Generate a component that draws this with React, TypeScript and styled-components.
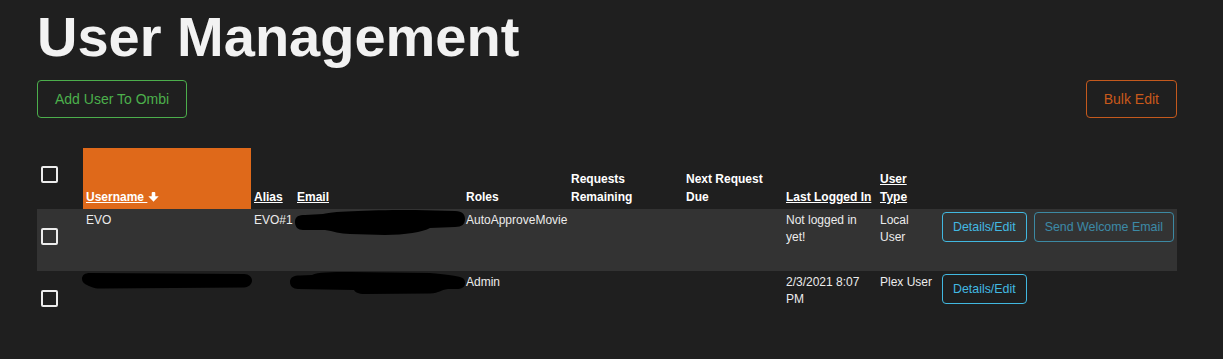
import React from "react";
import styled, { createGlobalStyle } from "styled-components";

const GlobalStyle = createGlobalStyle`
  html, body {
    margin: 0;
    padding: 0;
    background: #1f1f1f;
  }
  body {
    font-family: "Liberation Sans", Arial, sans-serif;
    color: #e8e8e8;
    min-height: 359px;
  }
  * { box-sizing: border-box; }
`;

const COLUMNS = "46px 168px 43px 169px 105px 115px 100px 94px 62px 1fr";

const Page = styled.div`
  padding: 5px 46px 0 37px;
`;

const Title = styled.h1`
  margin: 0;
  font-size: 56px;
  line-height: 64px;
  font-weight: 700;
  color: #f2f2f2;
`;

const Toolbar = styled.div`
  display: flex;
  justify-content: space-between;
  align-items: center;
  margin-top: 11px;
`;

const OutlineButton = styled.button<{ $tone: "green" | "orange" }>`
  height: 38px;
  padding: 0 17px;
  border-radius: 4px;
  background: transparent;
  font-family: "Liberation Sans", Arial, sans-serif;
  font-size: 14px;
  font-weight: 400;
  border: 1px solid ${(p) => (p.$tone === "green" ? "#4cae4c" : "#c4591d")};
  color: ${(p) => (p.$tone === "green" ? "#4cb04c" : "#c8591b")};
  cursor: pointer;
`;

const Table = styled.div`
  margin-top: 30px;
  display: flex;
  flex-direction: column;
`;

const HeaderRow = styled.div`
  display: grid;
  grid-template-columns: ${COLUMNS};
  height: 61px;
`;

const BodyRow = styled.div<{ $striped?: boolean }>`
  position: relative;
  display: grid;
  grid-template-columns: ${COLUMNS};
  height: 62px;
  background: ${(p) => (p.$striped ? "#333333" : "transparent")};
`;

const CheckCell = styled.div`
  display: flex;
  align-items: center;
  padding: 0 0 8px 4px;
`;

const Checkbox = styled.span`
  display: inline-block;
  width: 17px;
  height: 17px;
  border: 2px solid #ececec;
  border-radius: 2px;
`;

const HeaderCell = styled.div<{ $active?: boolean }>`
  display: flex;
  align-items: flex-end;
  padding: 0 3px 3px 3px;
  font-size: 12px;
  line-height: 18px;
  font-weight: 700;
  color: #ffffff;
  background: ${(p) => (p.$active ? "#df691a" : "transparent")};
`;

const HeaderLabel = styled.span<{ $sortable?: boolean }>`
  text-decoration: ${(p) => (p.$sortable ? "underline" : "none")};
  text-underline-offset: 1px;
`;

const SortArrow = styled.svg`
  width: 11px;
  height: 10px;
  margin-left: 1px;
  vertical-align: -1px;
`;

const Cell = styled.div`
  padding: 3px 3px 0 3px;
  font-size: 12px;
  line-height: 17px;
  color: #ececec;
  white-space: normal;
`;

const Actions = styled.div`
  display: flex;
  align-items: flex-start;
  gap: 7px;
  padding: 3px 3px 0 3px;
`;

const InfoButton = styled.button<{ $disabled?: boolean }>`
  height: 30px;
  padding: 0 10px;
  border-radius: 4px;
  background: transparent;
  border: 1px solid #41b8e0;
  color: #42b9e2;
  font-family: "Liberation Sans", Arial, sans-serif;
  font-size: 12.4px;
  opacity: ${(p) => (p.$disabled ? 0.65 : 1)};
  cursor: pointer;
`;

const Redaction = styled.svg`
  position: absolute;
  overflow: visible;
`;

type Row = {
  username: string;
  alias: string;
  roles: string;
  lastLogged: string;
  userType: string;
  welcome: boolean;
};

const rows: Row[] = [
  {
    username: "EVO",
    alias: "EVO#1",
    roles: "AutoApproveMovie",
    lastLogged: "Not logged in yet!",
    userType: "Local User",
    welcome: true,
  },
  {
    username: "",
    alias: "",
    roles: "Admin",
    lastLogged: "2/3/2021 8:07 PM",
    userType: "Plex User",
    welcome: false,
  },
];

function Arrow() {
  return (
    <SortArrow viewBox="0 0 11 10">
      <rect x="3.7" y="0" width="3.6" height="5.5" rx="1" fill="#fff" />
      <polygon points="0.3,4.2 10.7,4.2 5.5,9.8" fill="#fff" strokeLinejoin="round" />
    </SortArrow>
  );
}

export default function App() {
  return (
    <>
      <GlobalStyle />
      <Page>
        <Title>User Management</Title>
        <Toolbar>
          <OutlineButton $tone="green">Add User To Ombi</OutlineButton>
          <OutlineButton $tone="orange">Bulk Edit</OutlineButton>
        </Toolbar>
        <Table>
          <HeaderRow>
            <CheckCell>
              <Checkbox />
            </CheckCell>
            <HeaderCell $active>
              <span>
                <HeaderLabel $sortable>Username&nbsp;</HeaderLabel>
                <Arrow />
              </span>
            </HeaderCell>
            <HeaderCell>
              <HeaderLabel $sortable>Alias</HeaderLabel>
            </HeaderCell>
            <HeaderCell>
              <HeaderLabel $sortable>Email</HeaderLabel>
            </HeaderCell>
            <HeaderCell>
              <HeaderLabel>Roles</HeaderLabel>
            </HeaderCell>
            <HeaderCell>
              <HeaderLabel>Requests Remaining</HeaderLabel>
            </HeaderCell>
            <HeaderCell>
              <HeaderLabel>Next Request Due</HeaderLabel>
            </HeaderCell>
            <HeaderCell>
              <HeaderLabel $sortable>Last Logged In</HeaderLabel>
            </HeaderCell>
            <HeaderCell>
              <HeaderLabel $sortable>User Type</HeaderLabel>
            </HeaderCell>
            <HeaderCell />
          </HeaderRow>
          {rows.map((r, i) => (
            <BodyRow key={i} $striped={i === 0}>
              <CheckCell>
                <Checkbox />
              </CheckCell>
              <Cell>{r.username}</Cell>
              <Cell>{r.alias}</Cell>
              <Cell />
              <Cell>{r.roles}</Cell>
              <Cell />
              <Cell />
              <Cell>{r.lastLogged}</Cell>
              <Cell>{r.userType}</Cell>
              <Actions>
                <InfoButton>Details/Edit</InfoButton>
                {r.welcome && <InfoButton $disabled>Send Welcome Email</InfoButton>}
              </Actions>
              {i === 0 ? (
                <Redaction
                  style={{ left: 258, top: 1, width: 170, height: 25 }}
                  viewBox="0 0 170 25"
                >
                  <path
                    d="M0,12 C0,6 4,5 10,5 L28,4 C40,1 80,0 120,0 L160,1 C168,1 170,5 170,9 C170,14 167,17 160,17 L135,18 C128,22 110,25 90,25 L55,24 C45,24 38,21 30,20 L8,20 C3,20 0,17 0,12 Z"
                    fill="#000"
                  />
                </Redaction>
              ) : (
                <>
                  <Redaction
                    style={{ left: 45, top: 2, width: 170, height: 16 }}
                    viewBox="0 0 170 16"
                  >
                    <path
                      d="M0,6 C0,2 3,0 8,0 L162,1 C167,1 170,4 170,7.5 C170,11 167,14 162,14.5 L20,15.5 C12,16 8,13.5 6,12.5 C2,11 0,9 0,6 Z"
                      fill="#000"
                    />
                  </Redaction>
                  <Redaction
                    style={{ left: 253, top: 1, width: 175, height: 22 }}
                    viewBox="0 0 175 22"
                  >
                    <path
                      d="M0,10 C0,5 4,3.5 10,3.5 L22,3 C28,0 40,0 60,0 L140,1 C155,2 165,4 170,5 C174,6 175,8 175,11 C175,15 172,17 166,17 L158,17 C150,18 150,21 140,21.5 L75,22 C68,22 65,20 64,18 L8,17 C3,17 0,14 0,10 Z"
                      fill="#000"
                    />
                  </Redaction>
                </>
              )}
            </BodyRow>
          ))}
        </Table>
      </Page>
    </>
  );
}
